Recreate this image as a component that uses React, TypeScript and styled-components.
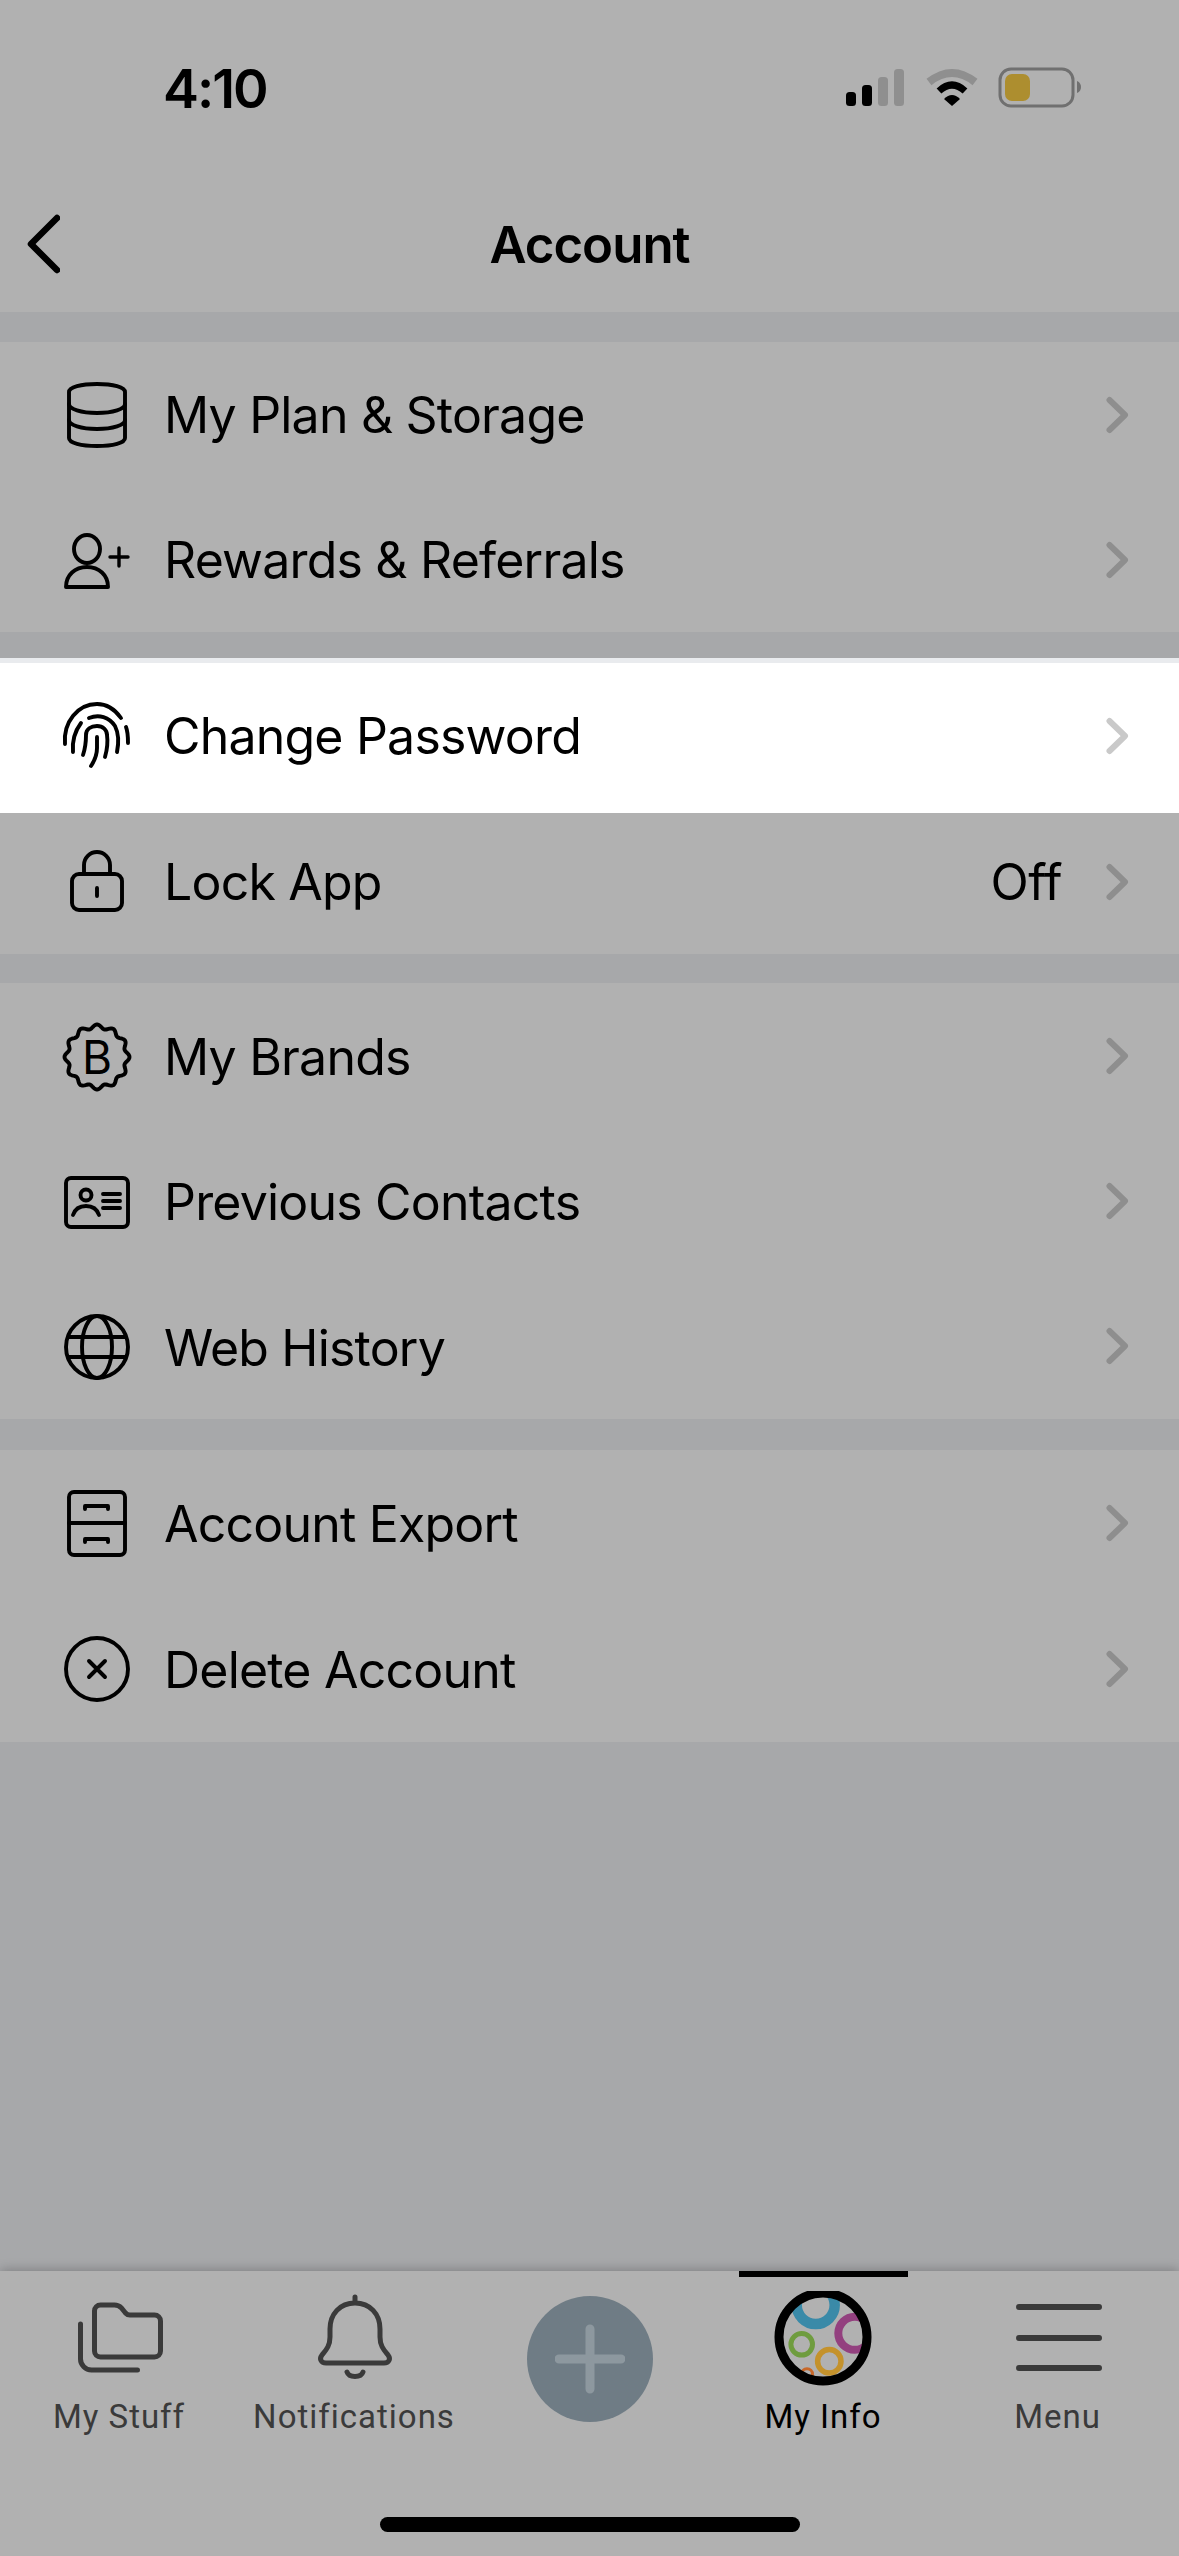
import React from "react";
import styled, { createGlobalStyle } from "styled-components";

const GlobalStyle = createGlobalStyle`
  html, body {
    margin: 0;
    padding: 0;
    background: #a7a8aa;
  }
  * {
    box-sizing: border-box;
  }
`;

const Page = styled.div`
  width: 1179px;
  height: 2556px;
  display: flex;
  flex-direction: column;
  background: #a7a8aa;
  font-family: Inter, "Liberation Sans", sans-serif;
  color: #000;
  overflow: hidden;
`;

const Header = styled.header`
  background: #b1b1b1;
`;

const StatusBar = styled.div`
  height: 176px;
  display: flex;
  align-items: center;
  justify-content: space-between;
  padding: 0 93px 0 163px;
`;

const Time = styled.div`
  font-size: 54px;
  font-weight: 600;
  letter-spacing: -2px;
`;

const NavBar = styled.div`
  height: 136px;
  display: grid;
  grid-template-columns: 1fr auto 1fr;
  align-items: center;
  padding: 0 24px;
`;

const Title = styled.div`
  font-size: 51px;
  font-weight: 600;
  letter-spacing: -1px;
`;

const Group = styled.section<{ $gap: number }>`
  margin-top: ${(p) => p.$gap}px;
  background: #b1b1b1;
`;

const Strip = styled.div`
  height: 5px;
  background: #e9ebee;
`;

const Row = styled.div<{ $active?: boolean; $height?: number; $lift?: number }>`
  height: ${(p) => p.$height ?? 145}px;
  display: flex;
  align-items: center;
  padding: 0 50px ${(p) => p.$lift ?? 0}px 64px;
  background: ${(p) => (p.$active ? "#fff" : "#b1b1b1")};
  color: ${(p) => (p.$active ? "#c9c9c9" : "#8e8e8e")};
`;

const RowIcon = styled.svg`
  width: 66px;
  height: 66px;
  flex: none;
  fill: none;
  stroke: #000;
  stroke-width: 3.9;
  stroke-linecap: round;
  stroke-linejoin: round;
  overflow: visible;
`;

const RowLabel = styled.div<{ $drop?: number }>`
  margin-left: 34px;
  padding-top: ${(p) => p.$drop ?? 0}px;
  flex: 1;
  font-size: 50px;
  font-weight: 400;
  letter-spacing: -0.8px;
  color: #000;
`;

const RowValue = styled.div`
  font-size: 50px;
  letter-spacing: -0.6px;
  color: #000;
  margin-right: 43px;
`;

const Chevron = styled.svg`
  width: 24px;
  height: 38px;
  flex: none;
  fill: none;
  stroke: currentColor;
  stroke-width: 6;
  stroke-linecap: round;
  stroke-linejoin: round;
`;

const Spacer = styled.div`
  flex: 1;
`;

const TabBar = styled.nav`
  height: 285px;
  background: #b1b1b1;
  box-shadow: 0 -2px 10px rgba(0, 0, 0, 0.22);
  display: flex;
  flex-direction: column;
  position: relative;
`;

const Tabs = styled.div`
  display: grid;
  grid-template-columns: 238px 232px 240px 226px 243px;
  height: 246px;
`;

const Tab = styled.div<{ $active?: boolean }>`
  display: flex;
  flex-direction: column;
  align-items: center;
  justify-content: flex-start;
  position: relative;
  color: ${(p) => (p.$active ? "#000" : "#3a3a3a")};
`;

const Indicator = styled.div`
  position: absolute;
  top: 0;
  left: calc(50% - 84.5px);
  width: 169px;
  height: 6px;
  background: #000;
`;

const TabIcon = styled.svg`
  width: 100px;
  height: 112px;
  margin-top: 20px;
  fill: none;
  stroke: #3a3a3a;
  stroke-width: 5;
  stroke-linecap: round;
  stroke-linejoin: round;
`;

const TabLabel = styled.div`
  font-family: Roboto, "Liberation Sans", sans-serif;
  font-size: 33px;
  letter-spacing: 1px;
  line-height: 40px;
  margin-top: -6px;
`;

const AddButton = styled.div`
  width: 126px;
  height: 126px;
  margin-top: 25px;
  border-radius: 50%;
  background: #6f7c85;
  display: flex;
  align-items: center;
  justify-content: center;
`;

const AddIcon = styled.svg`
  width: 70px;
  height: 70px;
  stroke: #8d989f;
  stroke-width: 9;
  stroke-linecap: round;
`;

const HomeIndicator = styled.div`
  width: 420px;
  height: 15px;
  margin: 0 auto;
  border-radius: 8px;
  background: #000;
`;

const StatusIcons = styled.svg`
  width: 240px;
  height: 50px;
`;

const scallop = () => {
  const pts: string[] = [];
  for (let i = 0; i < 180; i++) {
    const a = (i / 180) * Math.PI * 2;
    const r = 30.5 + 2 * Math.cos(a * 12);
    pts.push(`${(33 + r * Math.cos(a)).toFixed(2)},${(34 + r * Math.sin(a)).toFixed(2)}`);
  }
  return pts.join(" ");
};

const icons: Record<string, React.ReactNode> = {
  storage: (
    <>
      <path d="M5 10c0-5 12-8 28-8s28 3 28 8v46c0 5-12 8-28 8s-28-3-28-8Z" />
      <path d="M5 22c0 5 12 9 28 9s28-4 28-9" />
      <path d="M5 38c0 5 12 9 28 9s28-4 28-9" />
    </>
  ),
  rewards: (
    <>
      <ellipse cx="23" cy="22" rx="13" ry="14" />
      <path d="M2 60c0-12 9-20 21-20s21 8 21 20Z" />
      <path d="M46 30h18M55 21v18" strokeWidth="3.4" />
    </>
  ),
  fingerprint: (
    <g transform="translate(0 2)">
      <path d="M1 39C-1 17 14-1 33-1c9 0 17 4 24 14" />
      <path d="M62 22c2 5 2 10 2 16" />
      <path d="M17 18c-6 8-9 18-8 29" />
      <path d="M25 13c10-4 20-1 26 8 3 6 4 16 2 26" />
      <path d="M19 50c2-6 3-12 3-20 0-6 5-9 11-9s10 4 10 9c1 7 0 15-2 22" />
      <path d="M33 32v11c0 6-2 12-6 18" />
    </g>
  ),
  lock: (
    <>
      <rect x="8" y="25" width="50" height="36" rx="7" />
      <path d="M20 25v-9a13 13 0 0 1 26 0v9" />
      <path d="M33 39v8" />
    </>
  ),
  brand: (
    <>
      <polygon points={scallop()} />
      <text x="33" y="51" textAnchor="middle" fontFamily="Inter, sans-serif" fontSize="46" fill="#000" stroke="none">
        B
      </text>
    </>
  ),
  contacts: (
    <>
      <rect x="2" y="10" width="62" height="49" rx="5" />
      <circle cx="22" cy="27" r="5.5" />
      <path d="M9 47c2-6 7-9 13-9s11 3 13 9" />
      <path d="M39 26h17M39 33h17M39 40h17" />
    </>
  ),
  globe: (
    <>
      <circle cx="33" cy="34" r="31" />
      <ellipse cx="33" cy="34" rx="15" ry="31" />
      <path d="M5 24h56M5 44h56" />
    </>
  ),
  cabinet: (
    <>
      <rect x="5" y="2" width="56" height="63" rx="5" />
      <path d="M5 33h56" />
      <path d="M21 19v-3h23v3" />
      <path d="M21 52v-3h23v3" />
    </>
  ),
  delete: (
    <>
      <circle cx="33" cy="33" r="31" />
      <path d="M25 25l16 16M41 25L25 41" />
    </>
  ),
};

const lower = [
  {
    gap: 29,
    height: 145.33,
    rows: [
      { icon: "brand", label: "My Brands" },
      { icon: "contacts", label: "Previous Contacts" },
      { icon: "globe", label: "Web History" },
    ],
  },
  {
    gap: 31,
    height: 146,
    rows: [
      { icon: "cabinet", label: "Account Export" },
      { icon: "delete", label: "Delete Account" },
    ],
  },
];

const MenuRow = ({
  icon,
  label,
  value,
  active,
  height,
  lift,
  drop,
}: {
  icon: string;
  label: string;
  value?: string;
  active?: boolean;
  height?: number;
  lift?: number;
  drop?: number;
}) => (
  <Row $active={active} $height={height} $lift={lift}>
    <RowIcon viewBox="0 0 66 66">{icons[icon]}</RowIcon>
    <RowLabel $drop={drop}>{label}</RowLabel>
    {value && <RowValue>{value}</RowValue>}
    <Chevron viewBox="0 0 24 38">
      <path d="M4.5 4L20 19 4.5 34" />
    </Chevron>
  </Row>
);

const App = () => {
  return (
    <Page>
      <GlobalStyle />
      <Header>
        <StatusBar>
          <Time>4:10</Time>
          <StatusIcons viewBox="0 0 240 50">
            <rect x="0" y="29" width="10" height="14" rx="3.5" fill="#000" />
            <rect x="16" y="22" width="10" height="21" rx="3.5" fill="#000" />
            <rect x="32" y="14" width="10" height="29" rx="3.5" fill="#8f8f8f" />
            <rect x="48" y="6" width="10" height="37" rx="3.5" fill="#8f8f8f" />
            <path d="M83 19Q106 1 129 19" fill="none" stroke="#8f8f8f" strokeWidth="8" />
            <path d="M93 28Q106 16 119 28" fill="none" stroke="#000" strokeWidth="7" />
            <path d="M98 36Q106 28 114 36L106 43Z" fill="#000" />
            <rect x="154" y="6" width="73" height="37" rx="11" fill="none" stroke="#707070" strokeWidth="3" />
            <rect x="159" y="11" width="25" height="27" rx="7" fill="#ad8e2f" />
            <path d="M231 18c3 1 4 4 4 6s-1 5-4 6Z" fill="#707070" />
          </StatusIcons>
        </StatusBar>
        <NavBar>
          <svg width="36" height="60" viewBox="0 0 36 60" fill="none" stroke="#000" strokeWidth="6.5" strokeLinecap="round" strokeLinejoin="round">
            <path d="M33 4L7 30l26 26" />
          </svg>
          <Title>Account</Title>
        </NavBar>
      </Header>
      <Group $gap={30}>
        <MenuRow icon="storage" label="My Plan & Storage" />
        <MenuRow icon="rewards" label="Rewards & Referrals" />
      </Group>
      <Group $gap={26}>
        <Strip />
        <MenuRow icon="fingerprint" label="Change Password" active height={150} lift={4} />
        <MenuRow icon="lock" label="Lock App" value="Off" height={141} lift={4} />
      </Group>
      {lower.map((s) => (
        <Group key={s.gap} $gap={s.gap}>
          {s.rows.map((r) => (
            <MenuRow key={r.label} {...r} height={s.height} drop={3} />
          ))}
        </Group>
      ))}
      <Spacer />
      <TabBar>
        <Tabs>
          <Tab>
            <TabIcon viewBox="0 0 100 112">
              <g transform="translate(1.5 0)">
                <path d="M24 20a6 6 0 0 1 6-6h14c3 0 5 1 7 3l4 5a6 6 0 0 0 5 2h24a6 6 0 0 1 6 6v30a6 6 0 0 1-6 6H30a6 6 0 0 1-6-6Z" />
                <path d="M10 33v35c0 6 5 11 11 11h46" />
              </g>
            </TabIcon>
            <TabLabel>My Stuff</TabLabel>
          </Tab>
          <Tab>
            <TabIcon viewBox="0 0 100 112">
              <path d="M51 6v6M51 12c-15 0-25 11-25 26v8c0 9-4 13-8 18-3 4-1 8 4 8h58c5 0 7-4 4-8-4-5-8-9-8-18v-8c0-15-10-26-25-26Z" />
              <path d="M43 81c2 6 14 6 16 0" />
            </TabIcon>
            <TabLabel>Notifications</TabLabel>
          </Tab>
          <Tab>
            <AddButton>
              <AddIcon viewBox="0 0 70 70">
                <path d="M35 5v60M4 35h62" />
              </AddIcon>
            </AddButton>
          </Tab>
          <Tab $active>
            <Indicator />
            <TabIcon viewBox="0 0 100 112">
              <defs>
                <clipPath id="logoClip">
                  <circle cx="50" cy="46" r="41" />
                </clipPath>
              </defs>
              <g clipPath="url(#logoClip)" strokeLinecap="butt">
                <circle cx="42.7" cy="14" r="19" stroke="#3a8aa8" strokeWidth="10.5" />
                <circle cx="81.8" cy="42.3" r="16.5" stroke="#93407f" strokeWidth="8" />
                <circle cx="28.7" cy="53.3" r="10.8" stroke="#6f9c3f" strokeWidth="5" />
                <circle cx="56.3" cy="70.3" r="11.7" stroke="#c4922c" strokeWidth="5.5" />
                <circle cx="34" cy="83.3" r="5.5" stroke="#c8682a" strokeWidth="3" />
              </g>
              <circle cx="50" cy="46" r="44" stroke="#000" strokeWidth="9" />
            </TabIcon>
            <TabLabel>My Info</TabLabel>
          </Tab>
          <Tab>
            <TabIcon viewBox="0 0 100 112">
              <path d="M11 16h80M11 47h80M11 77h80" strokeWidth="6" />
            </TabIcon>
            <TabLabel>Menu</TabLabel>
          </Tab>
        </Tabs>
        <HomeIndicator />
      </TabBar>
    </Page>
  );
};

export default App;
